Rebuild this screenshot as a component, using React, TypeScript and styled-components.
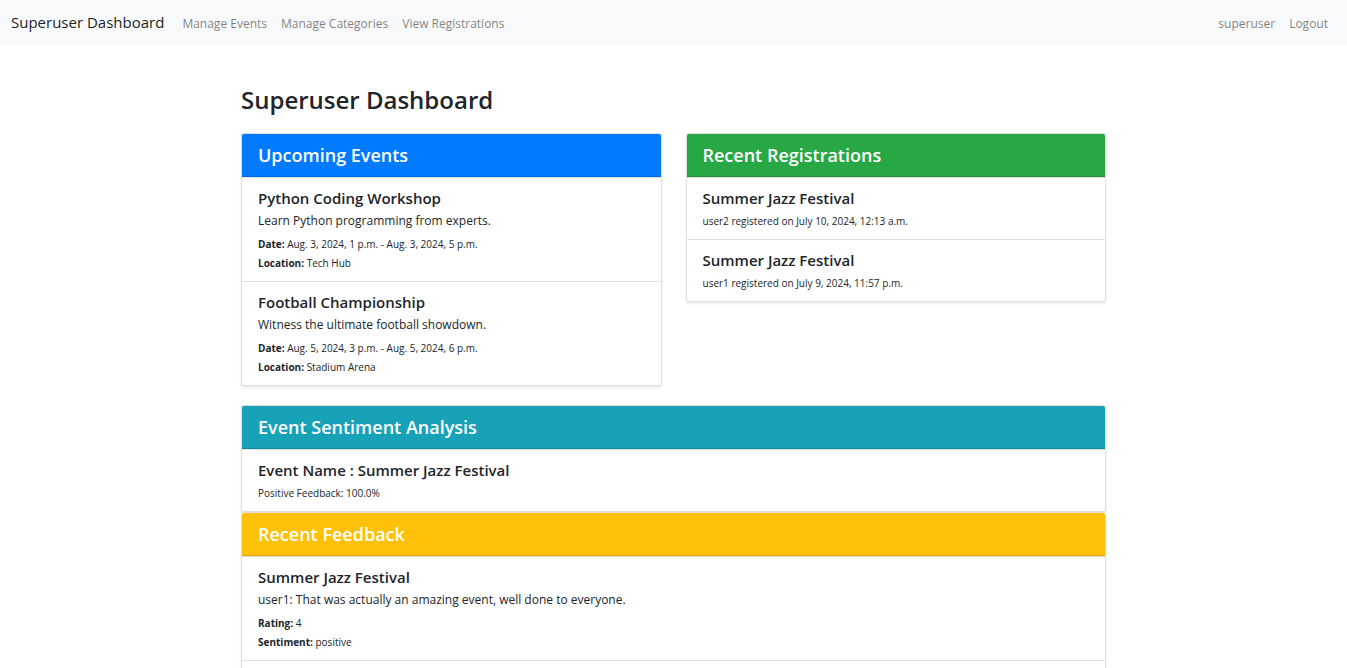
import React from "react";
import styled, { createGlobalStyle } from "styled-components";

const GlobalStyle = createGlobalStyle`
  * { box-sizing: border-box; }
  html { scrollbar-width: none; }
  body {
    margin: 0;
    background: #fff;
    color: #212529;
    font-family: "Segoe UI", "Open Sans", "Noto Sans", sans-serif;
    font-size: 12px;
    line-height: 17px;
  }
  h1, h2, h3, p, ul { margin: 0; padding: 0; }
  ul { list-style: none; }
`;

const Navbar = styled.nav`
  display: flex;
  align-items: baseline;
  padding: 10px 19px 11px 11px;
  background: #f8f9fa;
`;

const Brand = styled.a`
  margin-right: 18px;
  color: rgba(0, 0, 0, 0.9);
  font-size: 15px;
  line-height: 24px;
  text-decoration: none;
`;

const NavList = styled.ul<{ $end?: boolean }>`
  display: flex;
  gap: 14px;
  margin-left: ${(p) => (p.$end ? "auto" : "0")};
`;

const NavLink = styled.a`
  color: rgba(0, 0, 0, 0.5);
  text-decoration: none;
`;

const Main = styled.main`
  max-width: 865px;
  margin: 0 auto;
  padding: 38px 0 40px;
`;

const PageTitle = styled.h1`
  margin-bottom: 16px;
  font-size: 24px;
  line-height: 34px;
  font-weight: 600;
`;

const Columns = styled.div`
  display: grid;
  grid-template-columns: 1fr 1fr;
  align-items: start;
  gap: 24px;
  margin-bottom: 19px;
`;

const CardBox = styled.section`
  border: 1px solid rgba(0, 0, 0, 0.125);
  border-radius: 3px;
  background: #fff;
  box-shadow: 0 2px 3px rgba(0, 0, 0, 0.075);
`;

const CardHeader = styled.h2<{ $color: string }>`
  padding: 9px 16px;
  border-bottom: 1px solid rgba(0, 0, 0, 0.125);
  border-radius: 2px 2px 0 0;
  background: ${(p) => p.$color};
  color: #fff;
  font-size: 18px;
  line-height: 24px;
  font-weight: 600;
`;

const Item = styled.li`
  padding: 10px 16px 8px;
  border-top: 1px solid #dfdfdf;
`;

const ItemTitle = styled.h3`
  margin-bottom: 4px;
  font-size: 15px;
  line-height: 20px;
  font-weight: 600;
`;

const Description = styled.p`
  margin-bottom: 6px;
`;

const Detail = styled.p`
  font-size: 10px;
  line-height: 19px;
`;

const Label = styled.strong`
  font-weight: 700;
`;

type Entry = {
  title: string;
  text?: string;
  details: { label?: string; value: string }[];
};

const events: Entry[] = [
  {
    title: "Python Coding Workshop",
    text: "Learn Python programming from experts.",
    details: [
      { label: "Date:", value: "Aug. 3, 2024, 1 p.m. - Aug. 3, 2024, 5 p.m." },
      { label: "Location:", value: "Tech Hub" },
    ],
  },
  {
    title: "Football Championship",
    text: "Witness the ultimate football showdown.",
    details: [
      { label: "Date:", value: "Aug. 5, 2024, 3 p.m. - Aug. 5, 2024, 6 p.m." },
      { label: "Location:", value: "Stadium Arena" },
    ],
  },
];

const registrations: Entry[] = [
  {
    title: "Summer Jazz Festival",
    details: [{ value: "user2 registered on July 10, 2024, 12:13 a.m." }],
  },
  {
    title: "Summer Jazz Festival",
    details: [{ value: "user1 registered on July 9, 2024, 11:57 p.m." }],
  },
];

const sentiment: Entry[] = [
  {
    title: "Event Name : Summer Jazz Festival",
    details: [{ value: "Positive Feedback: 100.0%" }],
  },
];

const feedback: Entry[] = [
  {
    title: "Summer Jazz Festival",
    text: "user1: That was actually an amazing event, well done to everyone.",
    details: [
      { label: "Rating:", value: "4" },
      { label: "Sentiment:", value: "positive" },
    ],
  },
];

function Card({
  title,
  color,
  entries,
  children,
}: {
  title: string;
  color: string;
  entries: Entry[];
  children?: React.ReactNode;
}) {
  return (
    <CardBox>
      <CardHeader $color={color}>{title}</CardHeader>
      <ul>
        {entries.map((entry, i) => (
          <Item key={i}>
            <ItemTitle>{entry.title}</ItemTitle>
            {entry.text && <Description>{entry.text}</Description>}
            {entry.details.map((d) => (
              <Detail key={d.value}>
                {d.label && <Label>{d.label}</Label>} {d.value}
              </Detail>
            ))}
          </Item>
        ))}
        {children}
      </ul>
    </CardBox>
  );
}

export default function App() {
  return (
    <>
      <GlobalStyle />
      <Navbar>
        <Brand href="#">Superuser Dashboard</Brand>
        <NavList>
          <li><NavLink href="#events">Manage Events</NavLink></li>
          <li><NavLink href="#categories">Manage Categories</NavLink></li>
          <li><NavLink href="#registrations">View Registrations</NavLink></li>
        </NavList>
        <NavList $end>
          <li><NavLink href="#profile">superuser</NavLink></li>
          <li><NavLink href="#logout">Logout</NavLink></li>
        </NavList>
      </Navbar>
      <Main>
        <PageTitle>Superuser Dashboard</PageTitle>
        <Columns>
          <Card title="Upcoming Events" color="#007bff" entries={events} />
          <Card title="Recent Registrations" color="#28a745" entries={registrations} />
        </Columns>
        <Card title="Event Sentiment Analysis" color="#17a2b8" entries={sentiment} />
        <Card title="Recent Feedback" color="#ffc107" entries={feedback}>
          <Item />
        </Card>
      </Main>
    </>
  );
}
